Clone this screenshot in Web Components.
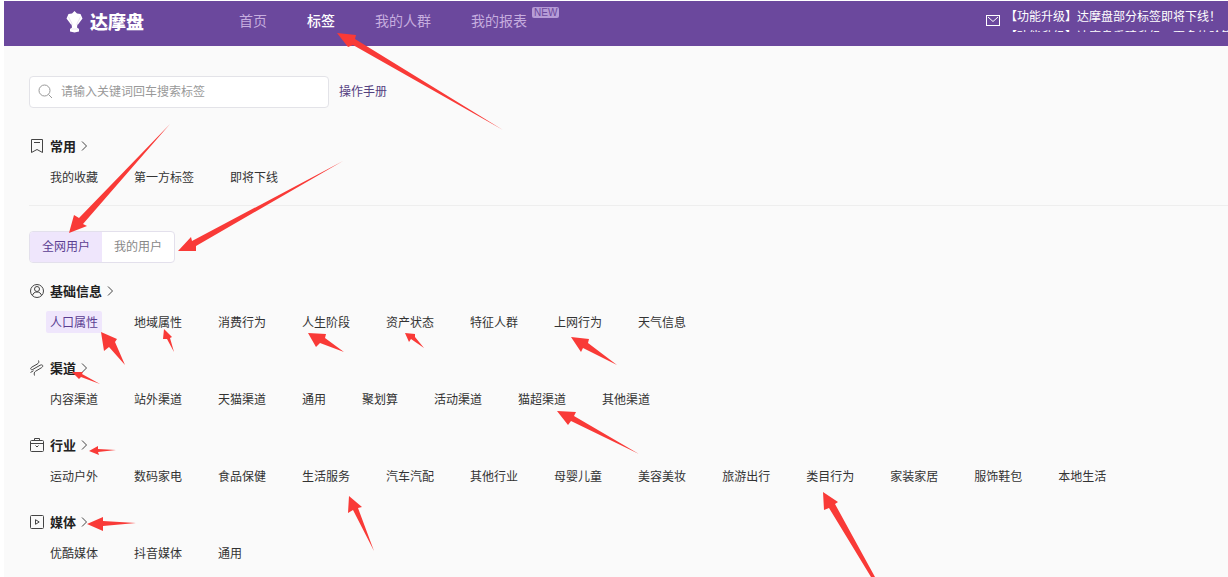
<!DOCTYPE html>
<html lang="zh-CN">
<head>
<meta charset="utf-8">
<title>达摩盘 - 标签</title>
<style>
    body {
        margin: 0;
        background: #fff;
        color: #333;
        font-family: "Noto Sans CJK SC", "Liberation Sans", sans-serif;
        font-size: 12px;
        line-height: 20px;
    }
</style>
</head>
<body>
<dmp-app></dmp-app>
<arrow-layer></arrow-layer>

<script>
/**
 * Stroke icons used by the section headings, the search box and the header.
 */
const ICONS = {
    bookmark: '<path d="M2.500 1.500h11v13l-5.500-3-5.500 3z"/><path d="M5 4.500h6"/>',
    user: '<circle cx="8" cy="8" r="6.500"/><circle cx="8" cy="6" r="2.500"/><path d="M3.500 12.500c.5-2.200 2-3.500 4.500-3.500s4 1.300 4.500 3.500"/>',
    channel: '<path d="M9.500 .5c.8 2 0 2.800-1.500 3.700l-5 2.800c-2.500 1.500-1 3.500 1 2.300l7-4c2.500-1.300 4 .8 1.500 2.400l-6 3.600c-1.500 1-1.500 2.200-1 4.200M1.500 12.500l3-1.800"/>',
    briefcase: '<rect x="1.500" y="3.500" width="13" height="11" rx="1"/><path d="M5.500 3.500v-2h5v2M1.500 6.500h13M6.500 8.500l1.500 1.500 1.500-1.500"/>',
    media: '<rect x="1.500" y="1.500" width="13" height="13" rx="1"/><path d="M6.500 5.700v4.600l3.700-2.300z"/>',
    search: '<circle cx="7.500" cy="7.500" r="5.500"/><path d="M11.500 11.500l3.500 3.500"/>',
    mail: '<rect x="1.500" y="3.500" width="13" height="10"/><path d="M3 5l5 4.500 5-4.500"/>'
};

/**
 * Icon, picked by the "name" attribute.
 */
class DmpIcon extends HTMLElement {
    constructor() {
        super();
        this.attachShadow({ mode: 'open' });
    }

    connectedCallback() {
        this.shadowRoot.innerHTML = `
            <style>
                :host { display: block; flex: none; width: 16px; height: 16px; }
                svg { display: block; fill: none; stroke: currentColor; }
            </style>
            <svg width="16" height="16" viewBox="0 0 16 16" aria-hidden="true">${ICONS[this.getAttribute('name')]}</svg>
        `;
    }
}
customElements.define('dmp-icon', DmpIcon);

/**
 * Top bar: logo, navigation and notices.
 */
class DmpHeader extends HTMLElement {
    constructor() {
        super();
        this.attachShadow({ mode: 'open' });
        this.shadowRoot.innerHTML = `
            <style>
                :host {
                    display: flex;
                    align-items: center;
                    box-sizing: border-box;
                    height: 45px;
                    padding: 0 0 8px 62px;
                    background: #6b489d;
                    color: #fff;
                }
                a { color: inherit; text-decoration: none; }
                .logo {
                    display: flex;
                    align-items: center;
                    gap: 7px;
                    padding-top: 2px;
                    font-size: 18px;
                    font-weight: 900;
                }
                .logo svg { margin-top: 2px; }
                nav { display: flex; gap: 40px; margin-left: 95px; font-size: 14px; }
                nav a { position: relative; color: #c6addf; white-space: nowrap; }
                nav a.active { color: #fff; font-weight: 500; }
                .badge {
                    position: absolute;
                    left: 100%;
                    top: -3px;
                    margin-left: 5px;
                    padding: 0 2px;
                    border-radius: 2px;
                    background: #b69bd6;
                    color: #6b489d;
                    font: 10px/11px "Liberation Sans", sans-serif;
                }
                .notice { display: flex; align-items: center; margin-left: auto; gap: 4px; }
                .notice dmp-icon { margin-left: 1px; }
                .ticker { width: 223px; height: 26px; margin-top: -2px; overflow: hidden; white-space: nowrap; }
                .ticker a { display: block; }
            </style>
            <a class="logo" href="#">
                <svg width="17" height="22" viewBox="0 0 17 22" fill="#fff" aria-hidden="true">
                    <path d="M8.500 0l2.500 2.500 3.500.5 2 4.500-4.500 6h-7l-4.500-6 2-4.500 3.500-.5z"/>
                    <path d="M5.500 13h6l-.5 3.500 2 1.500v2.500l-4.500 1-4.500-1v-2.500l2-1.500z"/>
                    <path d="M2.500 6l4 7.500M14.500 6l-4 7.500M4.500 18h8" stroke="#d3c5e3" stroke-width=".5" fill="none"/>
                </svg>
                <span>达摩盘</span>
            </a>
            <nav>
                <a href="#">首页</a>
                <a href="#" class="active">标签</a>
                <a href="#">我的人群</a>
                <a href="#">我的报表<span class="badge">NEW</span></a>
            </nav>
            <div class="notice">
                <dmp-icon name="mail"></dmp-icon>
                <div class="ticker">
                    <a href="#">【功能升级】达摩盘部分标签即将下线！</a>
                    <a href="#">【功能升级】达摩盘重磅升级，更多体验等你</a>
                </div>
            </div>
        `;
    }
}
customElements.define('dmp-header', DmpHeader);

/**
 * Keyword search with the link to the manual.
 */
class TagSearch extends HTMLElement {
    constructor() {
        super();
        this.attachShadow({ mode: 'open' });
        this.shadowRoot.innerHTML = `
            <style>
                :host { display: flex; align-items: center; gap: 10px; }
                label {
                    display: flex;
                    align-items: center;
                    gap: 8px;
                    box-sizing: border-box;
                    width: 300px;
                    height: 32px;
                    padding: 0 8px 2px 7px;
                    border: 1px solid #e3e3e8;
                    border-radius: 4px;
                    background: #fff;
                    color: #999;
                }
                input {
                    flex: 1;
                    min-width: 0;
                    padding: 0;
                    border: 0;
                    outline: 0;
                    background: none;
                    color: #333;
                    font: inherit;
                }
                input::placeholder { color: #999; }
                a { padding-bottom: 2px; color: #53407f; text-decoration: none; }
            </style>
            <label>
                <dmp-icon name="search"></dmp-icon>
                <input type="text" placeholder="请输入关键词回车搜索标签" aria-label="搜索标签">
            </label>
            <a href="#">操作手册</a>
        `;
    }
}
customElements.define('tag-search', TagSearch);

/**
 * Switch between all users and own users.
 */
class UserTabs extends HTMLElement {
    constructor() {
        super();
        this.attachShadow({ mode: 'open' });
        this.shadowRoot.innerHTML = `
            <style>
                :host {
                    display: flex;
                    box-sizing: border-box;
                    width: fit-content;
                    height: 32px;
                    border: 1px solid #e3e0ec;
                    border-radius: 4px;
                    background: #fff;
                    overflow: hidden;
                }
                button {
                    padding: 0 12px 2px;
                    border: 0;
                    background: none;
                    color: #888;
                    font: inherit;
                }
                button.active { background: #efe6fc; color: #5b3e92; }
            </style>
            <button type="button" class="active">全网用户</button>
            <button type="button">我的用户</button>
        `;
        this.shadowRoot.addEventListener('click', (event) => {
            if (!event.target.matches('button')) return;
            this.shadowRoot.querySelectorAll('button').forEach((button) => {
                button.classList.toggle('active', button === event.target);
            });
        });
    }
}
customElements.define('user-tabs', UserTabs);

/**
 * One group of tags: an icon, a heading and the slotted tag links.
 */
class TagSection extends HTMLElement {
    constructor() {
        super();
        this.attachShadow({ mode: 'open' });
    }

    connectedCallback() {
        this.shadowRoot.innerHTML = `
            <style>
                :host { display: block; }
                h2 {
                    display: flex;
                    align-items: center;
                    gap: 5px;
                    margin: 0 0 10px;
                    color: #222;
                    font-size: 13px;
                    font-weight: 700;
                    line-height: 20px;
                }
                dmp-icon { color: #444; }
                .chevron { fill: none; stroke: #444; }
                .tags { display: flex; flex-wrap: wrap; gap: 4px 28px; padding-left: 17px; }
                ::slotted(a) {
                    padding: 1px 4px;
                    border-radius: 2px;
                    color: #333;
                    text-decoration: none;
                }
                ::slotted(a.active) { background: #efe6fc; color: #5b3e92; }
            </style>
            <h2>
                <dmp-icon name="${this.getAttribute('icon')}"></dmp-icon>
                <span>${this.getAttribute('heading')}</span>
                <svg class="chevron" width="8" height="10" viewBox="0 0 8 10" aria-hidden="true"><path d="M1 .5l4.500 4.500-4.500 4.500"/></svg>
            </h2>
            <div class="tags"><slot></slot></div>
        `;
    }
}
customElements.define('tag-section', TagSection);

/**
 * Page shell.
 */
class DmpApp extends HTMLElement {
    constructor() {
        super();
        this.attachShadow({ mode: 'open' });
        this.shadowRoot.innerHTML = `
            <style>
                :host {
                    display: block;
                    box-sizing: border-box;
                    min-height: 100vh;
                    border: solid #fff;
                    border-width: 1px 0 0 4px;
                    background: #fafafa;
                }
                main { padding: 30px 0 0 25px; }
                .common { margin-top: 28px; padding-bottom: 17px; border-bottom: 1px solid #eee; }
                user-tabs { margin: 25px 0 18px; }
                .groups { display: grid; gap: 25px; }
            </style>
            <dmp-header></dmp-header>
            <main>
                <tag-search></tag-search>
                <tag-section class="common" icon="bookmark" heading="常用">
                    <a href="#">我的收藏</a><a href="#">第一方标签</a><a href="#">即将下线</a>
                </tag-section>
                <user-tabs></user-tabs>
                <div class="groups">
                    <tag-section icon="user" heading="基础信息">
                        <a href="#" class="active">人口属性</a><a href="#">地域属性</a><a href="#">消费行为</a><a href="#">人生阶段</a>
                        <a href="#">资产状态</a><a href="#">特征人群</a><a href="#">上网行为</a><a href="#">天气信息</a>
                    </tag-section>
                    <tag-section icon="channel" heading="渠道">
                        <a href="#">内容渠道</a><a href="#">站外渠道</a><a href="#">天猫渠道</a><a href="#">通用</a>
                        <a href="#">聚划算</a><a href="#">活动渠道</a><a href="#">猫超渠道</a><a href="#">其他渠道</a>
                    </tag-section>
                    <tag-section icon="briefcase" heading="行业">
                        <a href="#">运动户外</a><a href="#">数码家电</a><a href="#">食品保健</a><a href="#">生活服务</a>
                        <a href="#">汽车汽配</a><a href="#">其他行业</a><a href="#">母婴儿童</a><a href="#">美容美妆</a>
                        <a href="#">旅游出行</a><a href="#">类目行为</a><a href="#">家装家居</a><a href="#">服饰鞋包</a>
                        <a href="#">本地生活</a>
                    </tag-section>
                    <tag-section icon="media" heading="媒体">
                        <a href="#">优酷媒体</a><a href="#">抖音媒体</a><a href="#">通用</a>
                    </tag-section>
                </div>
            </main>
        `;
    }
}
customElements.define('dmp-app', DmpApp);

/**
 * Red annotation arrows drawn over the page.
 * Points: tip, barb, neck, tail, neck, barb.
 */
const ARROWS = [
    '337,33 356,35 355,39 503,130 353,45 348,47',
    '69,233 74,215 79,218 170,124 83,224 87,226',
    '178,251 191,237 192,241 343,161 196,246 196,251',
    '101,332 117,339 115,342 125,365 109,347 104,351',
    '164,329 172,337 170,338 174,352 167,339 163,339',
    '308,333 326,334 325,338 344,352 320,343 316,347',
    '405,333 415,334 415,337 424,348 411,339 409,342',
    '571,337 589,339 588,343 617,365 583,348 581,352',
    '557,411 576,412 574,416 639,454 571,421 568,425',
    '72,372 83,372 82,374 100,384 81,377 79,379',
    '89,451 98,446 98,449 116,450 98,452 99,455',
    '87,524 103,517 103,521 136,523 103,526 103,531',
    '349,496 362,507 358,508 374,551 353,510 348,513',
    '823,492 838,502 835,504 875,577 871,577 829,508 824,510'
];

class ArrowLayer extends HTMLElement {
    constructor() {
        super();
        this.attachShadow({ mode: 'open' });
        this.shadowRoot.innerHTML = `
            <style>
                :host { position: absolute; inset: 0; overflow: hidden; pointer-events: none; }
                svg { display: block; width: 100%; height: 100%; fill: #f93a37; }
            </style>
            <svg aria-hidden="true">${ARROWS.map((points) => `<polygon points="${points}"/>`).join('')}</svg>
        `;
    }
}
customElements.define('arrow-layer', ArrowLayer);
</script>
</body>
</html>
